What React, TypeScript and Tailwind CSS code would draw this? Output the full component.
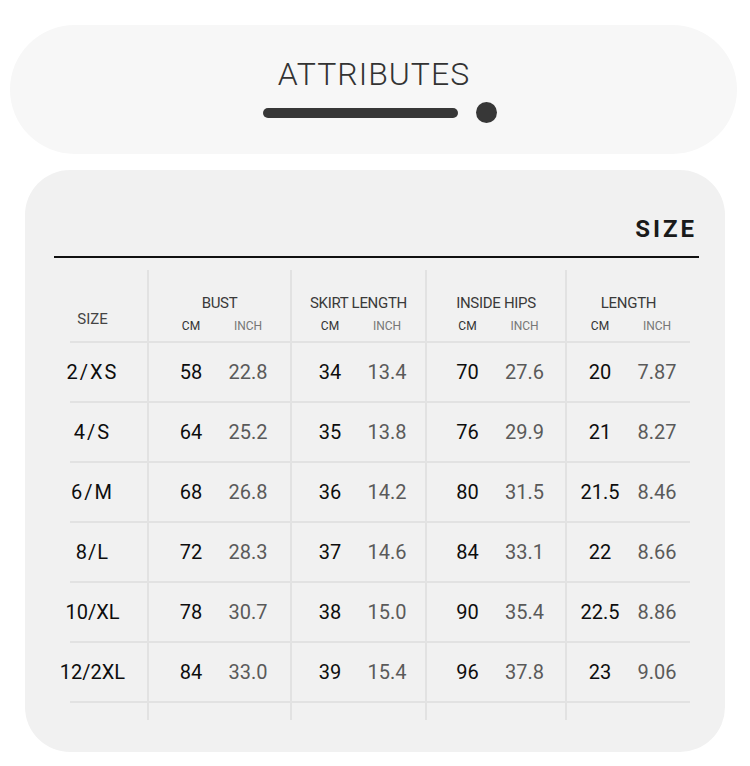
import React from 'react';

interface SizeRow {
    label: string;
    tracking: string;
    values: [string, string][];
}

const groups = ['BUST', 'SKIRT LENGTH', 'INSIDE HIPS', 'LENGTH'];

const rows: SizeRow[] = [
    { label: '2/XS', tracking: 'tracking-[2px]', values: [['58', '22.8'], ['34', '13.4'], ['70', '27.6'], ['20', '7.87']] },
    { label: '4/S', tracking: 'tracking-[2px]', values: [['64', '25.2'], ['35', '13.8'], ['76', '29.9'], ['21', '8.27']] },
    { label: '6/M', tracking: 'tracking-[2px]', values: [['68', '26.8'], ['36', '14.2'], ['80', '31.5'], ['21.5', '8.46']] },
    { label: '8/L', tracking: 'tracking-[1px]', values: [['72', '28.3'], ['37', '14.6'], ['84', '33.1'], ['22', '8.66']] },
    { label: '10/XL', tracking: 'tracking-normal', values: [['78', '30.7'], ['38', '15.0'], ['90', '35.4'], ['22.5', '8.86']] },
    { label: '12/2XL', tracking: 'tracking-normal', values: [['84', '33.0'], ['39', '15.4'], ['96', '37.8'], ['23', '9.06']] },
];

const font = { fontFamily: 'Roboto, "Liberation Sans", sans-serif' };

const Header = () => (
    <>
        <div className="h-[73px] pr-[32px] pt-[39px] text-center text-[15px] leading-[20px] text-[#444] border-b-2 border-[#e2e2e2]">
            SIZE
        </div>
        {groups.map(g => (
            <div key={g} className="h-[73px] pt-[23px] border-l-2 border-b-2 border-[#e2e2e2] flex flex-col items-center">
                <span className="text-[15px] leading-[20px] text-[#3a3a3a] tracking-[-0.3px]">{g}</span>
                <div className="mt-[5px] flex">
                    <span className="w-[57px] text-center text-[12px] leading-[16px] text-[#333]">CM</span>
                    <span className="w-[57px] text-center text-[12px] leading-[16px] text-[#777]">INCH</span>
                </div>
            </div>
        ))}
    </>
);

const DataRow = ({ row }: { row: SizeRow }) => (
    <>
        <div className={`h-[60px] pr-[32px] flex items-center justify-center text-[20px] text-[#0d0d0d] border-b-2 border-[#e2e2e2] ${row.tracking}`}>
            {row.label}
        </div>
        {row.values.map(([cm, inch], i) => (
            <div key={i} className="h-[60px] flex items-center justify-center border-l-2 border-b-2 border-[#e2e2e2] text-[20px]">
                <span className="w-[57px] text-center text-[#0d0d0d]">{cm}</span>
                <span className="w-[57px] text-center text-[#5a5a5a]">{inch}</span>
            </div>
        ))}
    </>
);

export default function App() {
    return (
        <div className="w-[750px] h-[766px] bg-white pt-[25px]" style={font}>
            <div className="ml-[10px] mr-[13px] h-[129px] rounded-full bg-[#f7f7f7] pt-[31px] flex flex-col items-center">
                <h1 className="text-[32px] leading-[36px] font-light text-[#333] tracking-[1px] pl-[1px]">ATTRIBUTES</h1>
                <div className="mt-[10px] pl-[13px] flex items-center gap-[18px]">
                    <div className="w-[195px] h-[10px] rounded-full bg-[#373737]" />
                    <div className="w-[21px] h-[21px] rounded-full bg-[#373737]" />
                </div>
            </div>

            <div className="mt-[16px] ml-[25px] w-[700px] h-[582px] rounded-[45px] bg-[#f1f1f1] pt-[45px]">
                <div className="pr-[28px] text-right text-[24px] leading-[28px] font-bold text-[#1a1a1a] tracking-[3px]">
                    SIZE
                </div>
                <div className="mt-[13px] ml-[29px] mr-[26px] h-[2px] bg-[#111]" />

                <div className="mt-[12px] ml-[45px] grid grid-cols-[77px_143px_135px_140px_125px]">
                    <Header />
                    {rows.map(r => <DataRow key={r.label} row={r} />)}
                    <div className="h-[17px]" />
                    <div className="h-[17px] border-l-2 border-[#e2e2e2]" />
                    <div className="h-[17px] border-l-2 border-[#e2e2e2]" />
                    <div className="h-[17px] border-l-2 border-[#e2e2e2]" />
                    <div className="h-[17px] border-l-2 border-[#e2e2e2]" />
                </div>
            </div>
        </div>
    );
}
